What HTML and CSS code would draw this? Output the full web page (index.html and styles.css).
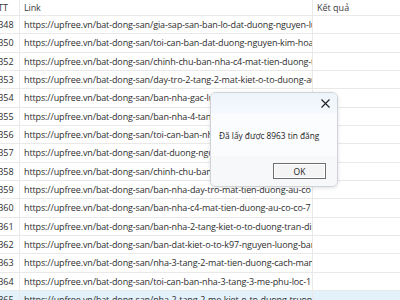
FILE: index.html
```html
<!DOCTYPE html>
<html lang="vi">
<head>
<meta charset="utf-8">
<link rel="stylesheet" href="styles.css">
</head>
<body>
<div class="grid">
  <div class="row head"><div class="c stt">STT</div><div class="c link">Link</div><div class="c res">Kết quả</div></div>
  <div class="row"><div class="c stt">1348</div><div class="c link">https://upfree.vn/bat-dong-san/gia-sap-san-ban-lo-dat-duong-nguyen-luong-bang</div><div class="c res"></div></div>
  <div class="row"><div class="c stt">1350</div><div class="c link">https://upfree.vn/bat-dong-san/toi-can-ban-dat-duong-nguyen-kim-hoang</div><div class="c res"></div></div>
  <div class="row"><div class="c stt">1352</div><div class="c link">https://upfree.vn/bat-dong-san/chinh-chu-ban-nha-c4-mat-tien-duong-ton-dan</div><div class="c res"></div></div>
  <div class="row"><div class="c stt">1353</div><div class="c link">https://upfree.vn/bat-dong-san/day-tro-2-tang-2-mat-kiet-o-to-duong-au-co</div><div class="c res"></div></div>
  <div class="row"><div class="c stt">1354</div><div class="c link">https://upfree.vn/bat-dong-san/ban-nha-gac-lung-kiet-o-to-duong-ton-dan</div><div class="c res"></div></div>
  <div class="row"><div class="c stt">1355</div><div class="c link">https://upfree.vn/bat-dong-san/ban-nha-4-tang-mat-tien-duong-nguyen-tat-thanh</div><div class="c res"></div></div>
  <div class="row"><div class="c stt">1356</div><div class="c link">https://upfree.vn/bat-dong-san/toi-can-ban-nha-kiet-o-to-duong-au-co</div><div class="c res"></div></div>
  <div class="row"><div class="c stt">1357</div><div class="c link">https://upfree.vn/bat-dong-san/dat-duong-ngo-thi-nham-lien-chieu</div><div class="c res"></div></div>
  <div class="row"><div class="c stt">1358</div><div class="c link">https://upfree.vn/bat-dong-san/chinh-chu-ban-nha-mat-tien-duong-au-co</div><div class="c res"></div></div>
  <div class="row"><div class="c stt">1359</div><div class="c link">https://upfree.vn/bat-dong-san/ban-nha-day-tro-mat-tien-duong-au-co</div><div class="c res"></div></div>
  <div class="row"><div class="c stt">1360</div><div class="c link">https://upfree.vn/bat-dong-san/ban-nha-c4-mat-tien-duong-au-co-co-7</div><div class="c res"></div></div>
  <div class="row"><div class="c stt">1361</div><div class="c link">https://upfree.vn/bat-dong-san/ban-nha-2-tang-kiet-o-to-duong-tran-dinh-tri</div><div class="c res"></div></div>
  <div class="row"><div class="c stt">1362</div><div class="c link">https://upfree.vn/bat-dong-san/ban-dat-kiet-o-to-k97-nguyen-luong-bang</div><div class="c res"></div></div>
  <div class="row"><div class="c stt">1363</div><div class="c link">https://upfree.vn/bat-dong-san/nha-3-tang-2-mat-tien-duong-cach-mang-thang-8</div><div class="c res"></div></div>
  <div class="row"><div class="c stt">1364</div><div class="c link">https://upfree.vn/bat-dong-san/toi-can-ban-nha-3-tang-3-me-phu-loc-1</div><div class="c res"></div></div>
  <div class="row sel"><div class="c stt">1365</div><div class="c link">https://upfree.vn/bat-dong-san/nha-2-tang-2-me-kiet-o-to-duong-truong-chinh</div><div class="c res"></div></div>
</div>

<div class="dialog">
  <div class="dlg-title">
    <svg class="close" width="9" height="9" viewBox="0 0 9 9"><path d="M0.5 0.5L8.5 8.5M8.5 0.5L0.5 8.5" stroke="#1f1f1f" stroke-width="1.1"/></svg>
  </div>
  <div class="dlg-body">Đã lấy được 8963 tin đăng</div>
  <div class="dlg-foot"><div class="btn">OK</div></div>
</div>
</body>
</html>
```

FILE: styles.css
```css
html, body {
  margin: 0;
  padding: 0;
  width: 400px;
  height: 300px;
  overflow: hidden;
  background: #ffffff;
  font-family: "Open Sans", "Noto Sans", sans-serif;
  font-size: 9px;
  color: #2e2e2e;
}

.grid {
  margin-left: -10px;
  width: 420px;
}

.row {
  display: flex;
  height: 18.33px;
  border-bottom: 1px solid #e9e9e9;
  box-sizing: border-box;
}

.row.head {
  height: 16px;
}

.row.sel {
  background: #e3f1fb;
}

.c {
  box-sizing: border-box;
  overflow: hidden;
  white-space: nowrap;
  display: flex;
  align-items: center;
  border-right: 1px solid #e9e9e9;
}

.stt {
  width: 30px;
  padding-left: 3px;
}

.link {
  width: 293px;
  padding-left: 4px;
  letter-spacing: -0.13px;
}

.res {
  flex: 1;
  padding-left: 4px;
  border-right: none;
}

.head .c {
  color: #3a3a3a;
}

.dialog {
  position: absolute;
  left: 210px;
  top: 92px;
  width: 128px;
  height: 95px;
  box-sizing: border-box;
  border: 1px solid #cfd3d8;
  border-radius: 6px;
  background: #ffffff;
  box-shadow: 0 1px 4px rgba(0, 0, 0, 0.12);
  display: flex;
  flex-direction: column;
  overflow: hidden;
}

.dlg-title {
  height: 21px;
  background: linear-gradient(#edf4fb, #f6f9fd);
  display: flex;
  justify-content: flex-end;
  align-items: center;
  padding-right: 7px;
}

.dlg-body {
  height: 42px;
  display: flex;
  align-items: center;
  padding-left: 8px;
  font-size: 8.3px;
  color: #1a1a1a;
  background: #fbfcfe;
}

.dlg-foot {
  flex: 1;
  display: flex;
  justify-content: flex-end;
  align-items: flex-start;
  padding-right: 11px;
  padding-top: 7px;
  background: #f7f8f9;
}

.btn {
  width: 53px;
  height: 16px;
  box-sizing: border-box;
  border: 1px solid #6e6e6e;
  background: #f4f4f4;
  box-shadow: inset 0 0 0 1px #ffffff;
  display: flex;
  align-items: center;
  justify-content: center;
  font-size: 8.5px;
  color: #1a1a1a;
}
```
